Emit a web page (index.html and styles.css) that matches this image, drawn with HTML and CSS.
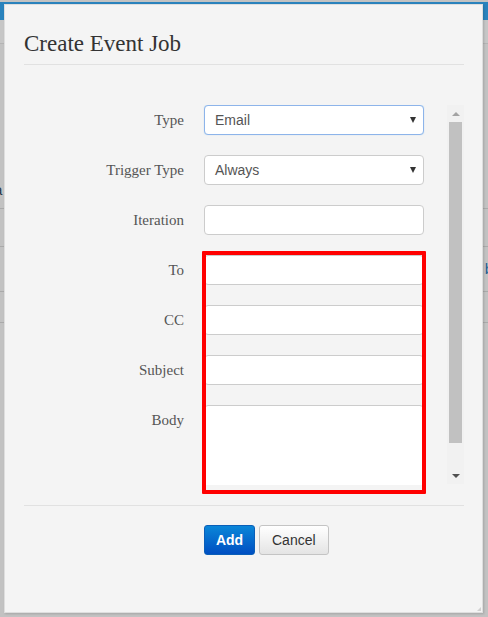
FILE: index.html
```html
<!DOCTYPE html>
<html>
<head>
<meta charset="utf-8">
<link rel="stylesheet" href="styles.css">
</head>
<body>
<div class="page">
  <div class="topbar"></div>
  <div class="subbar"></div>
  <div class="content">
    <div class="row r1"><span class="frag">a</span></div>
    <div class="row r2"></div>
    <div class="row r3"><span class="frag-right">b</span></div>
    <div class="row r4"></div>
  </div>
</div>

<div class="modal">
  <div class="header">
    <h1 class="title">Create Event Job</h1>
  </div>
  <div class="scroll">
    <div class="form">
      <label class="lbl">Type</label>
      <div class="select focus"><span>Email</span><i class="caret"></i></div>
      <label class="lbl">Trigger Type</label>
      <div class="select"><span>Always</span><i class="caret"></i></div>
      <label class="lbl">Iteration</label>
      <div class="input"></div>
      <label class="lbl">To</label>
      <div class="input"></div>
      <label class="lbl">CC</label>
      <div class="input"></div>
      <label class="lbl">Subject</label>
      <div class="input"></div>
      <label class="lbl">Body</label>
      <div class="input textarea"></div>
    </div>
    <div class="scrollbar">
      <div class="sb-btn"><i class="up"></i></div>
      <div class="sb-track"><div class="sb-thumb"></div></div>
      <div class="sb-btn"><i class="down"></i></div>
    </div>
  </div>
  <div class="footer">
    <button class="btn primary">Add</button>
    <button class="btn">Cancel</button>
  </div>
  <div class="highlight"></div>
  <div class="grip"></div>
</div>
</body>
</html>
```

FILE: styles.css
```css
html, body {
  margin: 0;
  padding: 0;
}
body {
  width: 488px;
  height: 617px;
  overflow: hidden;
  background: #c2c2c2;
  font-family: "Liberation Sans", Arial, sans-serif;
  position: relative;
}

/* dimmed page behind */
.page {
  height: 617px;
}
.topbar {
  margin-top: 2px;
  height: 18px;
  background: #2a83bd;
}
.subbar {
  height: 23px;
  background: #c6c6c6;
  border-bottom: 1px solid #b4b4b4;
}
.content {
  padding-top: 136px;
}
.row {
  border-bottom: 1px solid #aaaaaa;
  position: relative;
  font-size: 15px;
  color: #2c3a48;
}
.r1 { height: 28px; }
.r2 { height: 37px; }
.r3 { height: 44px; }
.r4 { height: 30px; }
.frag {
  display: block;
  margin-left: -6px;
  line-height: 20px;
}
.frag-right {
  display: block;
  text-align: right;
  margin-right: -5px;
  color: #245f92;
  line-height: 44px;
}

/* modal */
.modal {
  position: absolute;
  left: 4px;
  top: 4px;
  width: 479px;
  height: 609px;
  box-sizing: border-box;
  background: #f4f4f4;
  border: 1px solid #dedede;
  box-shadow: 1px 1px 2px rgba(0,0,0,0.15);
  padding: 0 18px 0 19px;
}
.header {
  padding-top: 25px;
  padding-bottom: 6px;
  border-bottom: 1px solid #e1e1e1;
}
.title {
  margin: 0;
  font-family: "Liberation Serif", "Times New Roman", serif;
  font-weight: normal;
  font-size: 23px;
  line-height: 28px;
  color: #333333;
}

.scroll {
  margin-top: 40px;
  height: 380px;
  display: flex;
  overflow: hidden;
}
.form {
  flex: 1;
  display: grid;
  grid-template-columns: 160px 220px;
  column-gap: 20px;
  row-gap: 20px;
  align-content: start;
}
.lbl {
  font-family: "Liberation Serif", "Times New Roman", serif;
  font-size: 15px;
  line-height: 30px;
  color: #555555;
  text-align: right;
  align-self: start;
}
.select, .input {
  height: 30px;
  box-sizing: border-box;
  background: #ffffff;
  border: 1px solid #cccccc;
  border-radius: 4px;
}
.select {
  display: flex;
  align-items: center;
  justify-content: space-between;
  padding: 0 7px 0 10px;
  font-size: 14px;
  color: #555555;
}
.select.focus {
  border-color: #8db4ea;
  box-shadow: 0 0 1px rgba(102,175,233,0.5);
}
.caret {
  width: 0;
  height: 0;
  border-left: 3px solid transparent;
  border-right: 3px solid transparent;
  border-top: 6px solid #333333;
}
.textarea {
  height: 84px;
}

/* fake scrollbar */
.scrollbar {
  width: 17px;
  height: 379px;
  background: #f1f1f1;
  display: flex;
  flex-direction: column;
}
.sb-btn {
  height: 17px;
  display: flex;
  align-items: center;
  justify-content: center;
}
.up {
  width: 0; height: 0;
  border-left: 4px solid transparent;
  border-right: 4px solid transparent;
  border-bottom: 4px solid #a3a3a3;
}
.down {
  width: 0; height: 0;
  border-left: 4px solid transparent;
  border-right: 4px solid transparent;
  border-top: 4px solid #505050;
}
.sb-track {
  flex: 1;
  padding: 0 2px 24px;
  display: flex;
}
.sb-thumb {
  flex: 1;
  background: #c1c1c1;
}

.footer {
  margin-top: 20px;
  border-top: 1px solid #e1e1e1;
  padding: 19px 0 0 180px;
  display: flex;
  gap: 4px;
}
.btn {
  height: 30px;
  box-sizing: border-box;
  padding: 0 12px;
  font-family: "Liberation Sans", Arial, sans-serif;
  font-size: 14px;
  color: #333333;
  background: linear-gradient(#ffffff, #e4e4e4);
  border: 1px solid #c4c4c4;
  border-radius: 3px;
}
.btn.primary {
  width: 51px;
  padding: 0;
  color: #ffffff;
  font-weight: bold;
  background: linear-gradient(#0a86d8, #004fc2);
  border-color: #0a5fb8;
}

.highlight {
  position: absolute;
  left: 197px;
  top: 246px;
  width: 224px;
  height: 243px;
  box-sizing: border-box;
  border: 4px solid #ff0000;
  border-radius: 1px;
}
.grip {
  position: absolute;
  right: 1px;
  bottom: 1px;
  width: 0;
  height: 0;
  border-left: 4px solid transparent;
  border-bottom: 4px solid #d0d0d0;
}
```
